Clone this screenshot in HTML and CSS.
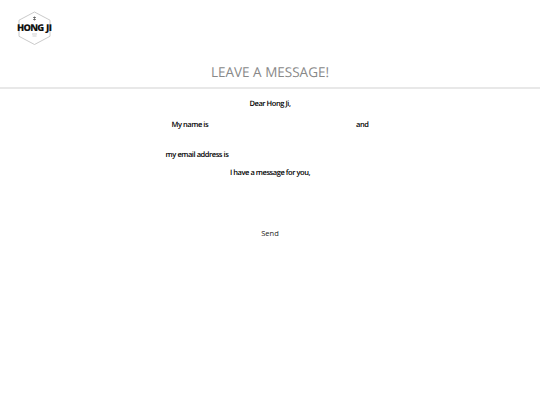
FILE: index.html
```html
<!DOCTYPE html>
<html lang="en">
<head>
<meta charset="utf-8">
<title>Leave a message</title>
<link rel="stylesheet" href="styles.css">
</head>
<body>
<header class="site-header">
  <div class="logo">
    <svg class="logo-hex" width="37" height="36" viewBox="0 0 37 36" aria-hidden="true">
      <path d="M18.5 1 L34 9.2 V25.3 L18.5 33.5 L3 25.3 V9.2 Z" fill="none" stroke="#bdbdbd" stroke-width="0.8"/>
      <path d="M17 6.5h3M18.5 5.5v4M17 8.5h3" fill="none" stroke="#555" stroke-width="0.7"/>
      <path d="M16 23h5M16.5 25h4" fill="none" stroke="#bbb" stroke-width="0.7"/>
    </svg>
    <span class="logo-text">HONG JI</span>
  </div>
</header>
<h1 class="title">LEAVE A MESSAGE!</h1>
<form class="message-form">
  <p class="line line-dear">Dear Hong Ji,</p>
  <p class="line line-name"><span>My name is</span><span class="blank-name"></span><span>and</span></p>
  <p class="line line-email"><span>my email address is</span><span class="blank-email"></span></p>
  <p class="line line-have">I have a message for you,</p>
  <button class="send" type="button">Send</button>
</form>
</body>
</html>
```
FILE: styles.css
```css
html, body { margin: 0; padding: 0; background: #fff; }
body { width: 540px; height: 405px; overflow: hidden; font-family: "Open Sans", sans-serif; color: #000; text-rendering: geometricPrecision; }
.site-header { height: 60px; padding: 11px 0 0 16px; box-sizing: border-box; }
.logo { position: relative; width: 37px; height: 36px; }
.logo-hex { display: block; }
.logo-text { position: absolute; left: 1px; top: 10px; font-size: 9.4px; line-height: 13px; font-weight: 800; color: #111; white-space: nowrap; letter-spacing: -0.75px; word-spacing: 1px; }
.title { margin: 0; height: 27px; line-height: 25px; text-align: center; font-size: 13.5px; font-weight: 400; color: #888; border-bottom: 2px solid #e8e8e8; }
.message-form { display: flex; flex-direction: column; align-items: center; }
.line { margin: 0; font-size: 7.5px; font-weight: 600; line-height: 12px; white-space: nowrap; display: flex; letter-spacing: -0.45px; }
.line-dear { margin-top: 9px; }
.line-name { margin-top: 9px; }
.blank-name { width: 148px; }
.line-email { margin-top: 18px; }
.blank-email { width: 146px; }
.line-have { margin-top: 6px; }
.send { margin-top: 48px; padding: 0; border: 0; background: none; font: 400 7.5px/12px "Open Sans", sans-serif; color: #222; }
```
